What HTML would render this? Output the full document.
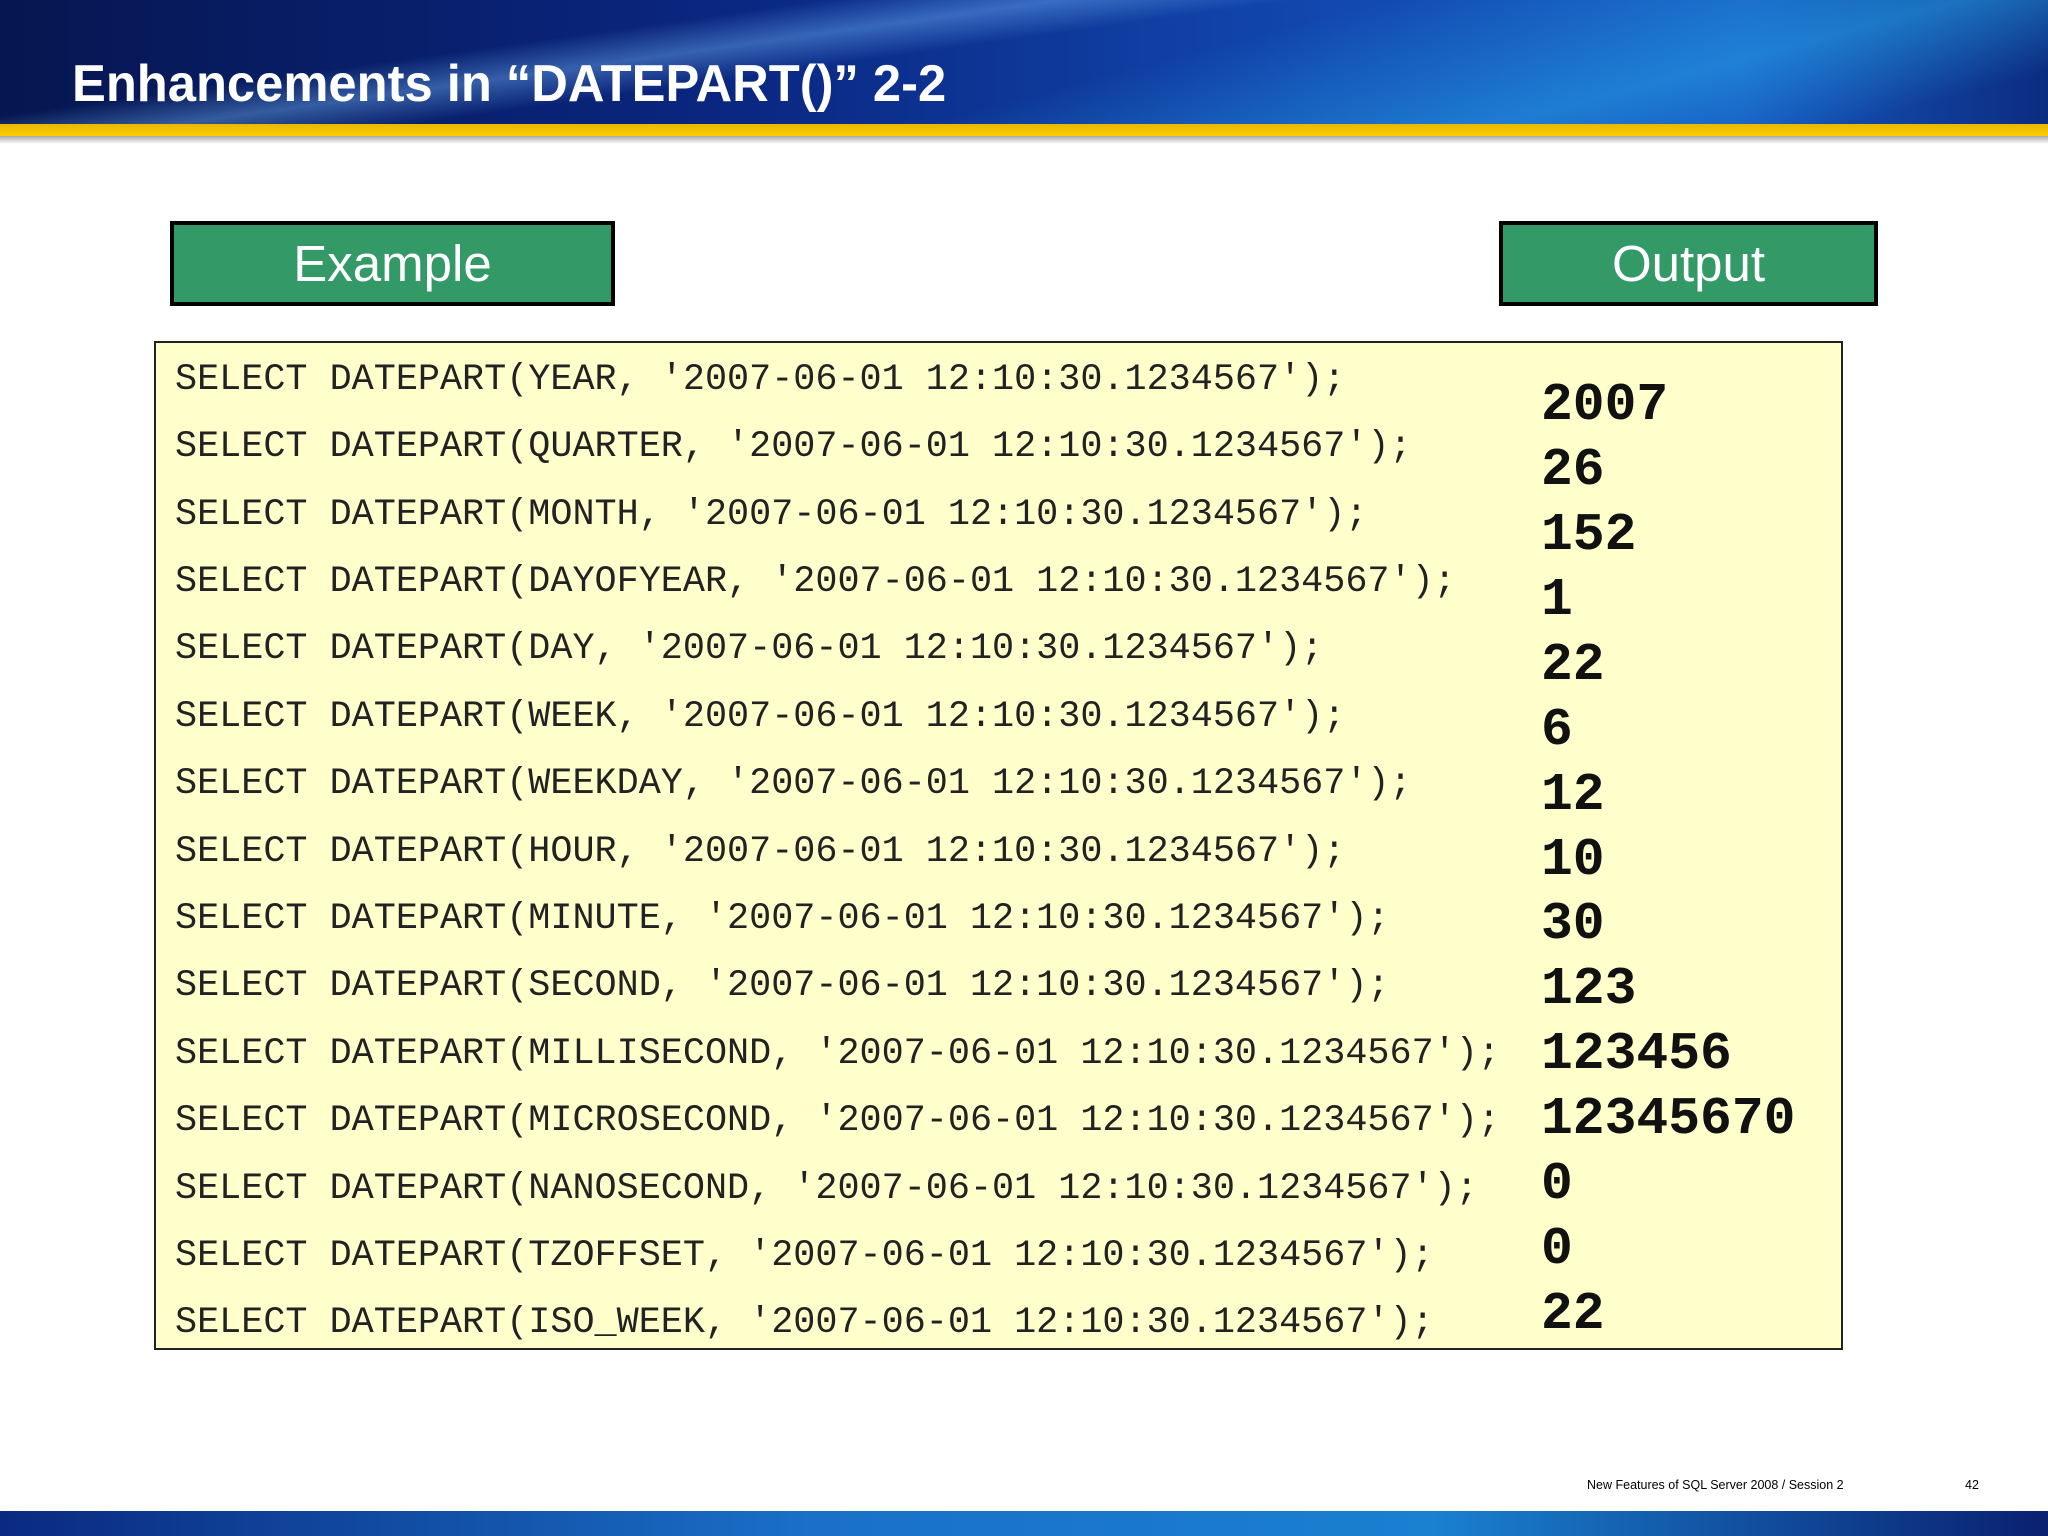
<!DOCTYPE html>
<html><head><meta charset="utf-8"><style>
html,body{margin:0;padding:0;}
body{width:2048px;height:1536px;position:relative;overflow:hidden;background:#fff;font-family:"Liberation Sans",sans-serif;}
.hdr{position:absolute;left:0;top:0;width:2048px;height:126px;
background:
linear-gradient(172deg, rgba(255,255,255,0) 28%, rgba(120,190,255,0.4) 36%, rgba(255,255,255,0) 44%),
linear-gradient(165deg, rgba(0,0,0,0) 55%, rgba(40,170,235,0.5) 78%, rgba(0,0,0,0) 92%),
linear-gradient(90deg,#061650 0%,#0a2680 35%,#1248b0 65%,#1658c0 85%,#0c2c80 100%);}
.yel{position:absolute;left:0;top:124px;width:2048px;height:12px;background:linear-gradient(#e8b800,#ffcc00);}
.shd{position:absolute;left:0;top:136px;width:2048px;height:8px;background:linear-gradient(#aaa,#fff);}
.title{position:absolute;left:72px;top:52px;color:#fff;font-weight:bold;font-size:52px;line-height:64px;white-space:nowrap;transform:scaleX(0.975);transform-origin:left;}
.tab{position:absolute;top:221px;height:77px;background:#339966;border:4px solid #000;color:#fff;font-size:51px;text-align:center;line-height:77px;}
.box{position:absolute;left:154px;top:341px;width:1685px;height:1005px;background:#ffffcc;border:2px solid #222;}
.code{position:absolute;left:175px;font-family:"Liberation Mono",monospace;font-size:36.8px;color:#222;white-space:pre;line-height:40px;}
.out{position:absolute;left:1541px;font-family:"Liberation Mono",monospace;font-weight:bold;font-size:53px;color:#111;line-height:60px;}
.foot{position:absolute;top:1478px;font-family:"Liberation Sans",sans-serif;font-size:12.5px;color:#000;}
.band{position:absolute;left:0;top:1511px;width:2048px;height:25px;background:linear-gradient(90deg,#0a2a80 0%,#1a70c8 40%,#1a80d0 70%,#0a2070 100%);}
</style></head><body>
<div class="hdr"></div><div class="yel"></div><div class="shd"></div>
<div class="title">Enhancements in “DATEPART()” 2-2</div>
<div class="tab" style="left:170px;width:437px;">Example</div>
<div class="tab" style="left:1499px;width:371px;">Output</div>
<div class="box"></div>
<div class="code" style="top:360px">SELECT DATEPART(YEAR, '2007-06-01 12:10:30.1234567');</div>
<div class="code" style="top:427px">SELECT DATEPART(QUARTER, '2007-06-01 12:10:30.1234567');</div>
<div class="code" style="top:495px">SELECT DATEPART(MONTH, '2007-06-01 12:10:30.1234567');</div>
<div class="code" style="top:562px">SELECT DATEPART(DAYOFYEAR, '2007-06-01 12:10:30.1234567');</div>
<div class="code" style="top:629px">SELECT DATEPART(DAY, '2007-06-01 12:10:30.1234567');</div>
<div class="code" style="top:697px">SELECT DATEPART(WEEK, '2007-06-01 12:10:30.1234567');</div>
<div class="code" style="top:764px">SELECT DATEPART(WEEKDAY, '2007-06-01 12:10:30.1234567');</div>
<div class="code" style="top:832px">SELECT DATEPART(HOUR, '2007-06-01 12:10:30.1234567');</div>
<div class="code" style="top:899px">SELECT DATEPART(MINUTE, '2007-06-01 12:10:30.1234567');</div>
<div class="code" style="top:966px">SELECT DATEPART(SECOND, '2007-06-01 12:10:30.1234567');</div>
<div class="code" style="top:1034px">SELECT DATEPART(MILLISECOND, '2007-06-01 12:10:30.1234567');</div>
<div class="code" style="top:1101px">SELECT DATEPART(MICROSECOND, '2007-06-01 12:10:30.1234567');</div>
<div class="code" style="top:1169px">SELECT DATEPART(NANOSECOND, '2007-06-01 12:10:30.1234567');</div>
<div class="code" style="top:1236px">SELECT DATEPART(TZOFFSET, '2007-06-01 12:10:30.1234567');</div>
<div class="code" style="top:1303px">SELECT DATEPART(ISO_WEEK, '2007-06-01 12:10:30.1234567');</div>
<div class="out" style="top:375px">2007</div>
<div class="out" style="top:440px">26</div>
<div class="out" style="top:505px">152</div>
<div class="out" style="top:570px">1</div>
<div class="out" style="top:635px">22</div>
<div class="out" style="top:700px">6</div>
<div class="out" style="top:765px">12</div>
<div class="out" style="top:830px">10</div>
<div class="out" style="top:894px">30</div>
<div class="out" style="top:959px">123</div>
<div class="out" style="top:1024px">123456</div>
<div class="out" style="top:1089px">12345670</div>
<div class="out" style="top:1154px">0</div>
<div class="out" style="top:1219px">0</div>
<div class="out" style="top:1284px">22</div>
<div class="foot" style="left:1587px">New Features of SQL Server 2008 / Session 2</div>
<div class="foot" style="left:1965px">42</div>
<div class="band"></div>
</body></html>
